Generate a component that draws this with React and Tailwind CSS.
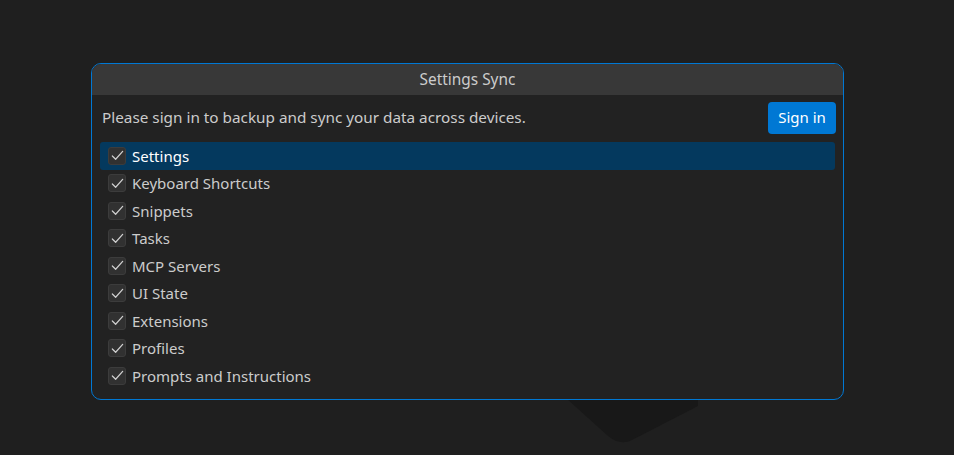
import React from "react";

const items = [
  "Settings",
  "Keyboard Shortcuts",
  "Snippets",
  "Tasks",
  "MCP Servers",
  "UI State",
  "Extensions",
  "Profiles",
  "Prompts and Instructions",
];

function Check() {
  return (
    <svg width="15" height="15" viewBox="0 0 16 16" fill="none">
      <path d="M2.5 8.5 L6 12 L13.5 3.5" stroke="#d0d0d0" strokeWidth="1.3" strokeLinecap="round" strokeLinejoin="round" />
    </svg>
  );
}

export default function App() {
  return (
    <div className="relative w-[954px] h-[455px] bg-[#1f1f1f] overflow-hidden" style={{ fontFamily: '"Noto Sans", "Open Sans", sans-serif' }}>
      <svg className="absolute left-[540px] top-[370px]" width="200" height="85" viewBox="0 0 200 85">
        <path d="M27 29 L68 66 Q80 76 92 70 L158 36 L158 29 Z" fill="#181818" />
      </svg>
      <div className="relative ml-[91px] mt-[63px] w-[753px] h-[337px] rounded-[10px] border border-[#0078d4] bg-[#222222] overflow-hidden">
        <div className="h-[31px] bg-[#383838] flex items-center justify-center text-[15.4px] text-[#cccccc]">
          Settings Sync
        </div>
        <div className="flex items-center justify-between pl-[10px] pr-[7px] pt-[3px] h-[42px]">
          <span className="text-[15.3px] text-[#cccccc]">Please sign in to backup and sync your data across devices.</span>
          <button className="h-[32px] w-[68px] rounded-[4px] bg-[#0078d4] text-white text-[15px] flex items-center justify-center">
            Sign in
          </button>
        </div>
        <div className="mx-[8px] mt-[5px] flex flex-col">
          {items.map((t, i) => (
            <div
              key={t}
              className={
                i === 0
                  ? "h-[27.5px] flex items-center rounded-[3px] bg-[#04395e] pl-[8px] text-[15px] text-white"
                  : "h-[27.5px] flex items-center pl-[8px] text-[15px] text-[#cccccc]"
              }
            >
              <span className="w-[18px] h-[18px] rounded-[3px] border border-[#3c3c3c] bg-[#313131] flex items-center justify-center mr-[6px]">
                <Check />
              </span>
              {t}
            </div>
          ))}
        </div>
      </div>
    </div>
  );
}
